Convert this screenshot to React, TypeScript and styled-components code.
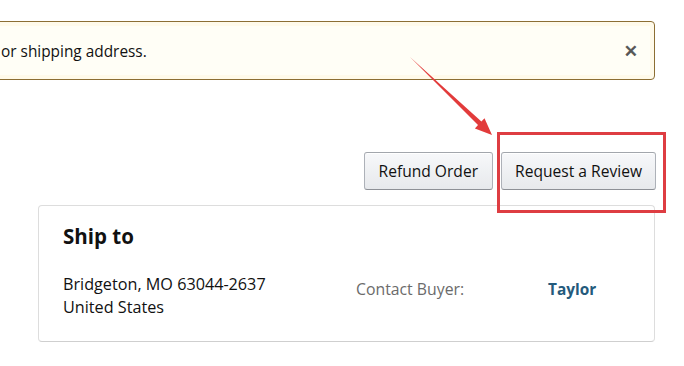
import React from "react";
import styled, { createGlobalStyle } from "styled-components";

const Global = createGlobalStyle`
  html, body { margin: 0; padding: 0; background: #fff; }
  body { font-family: "Open Sans", "Noto Sans", sans-serif; color: #111; overflow: hidden; }
`;

const Page = styled.div`
  position: relative;
  width: 684px;
  height: 366px;
  padding-top: 21px;
  box-sizing: border-box;
  overflow: hidden;
`;

const Alert = styled.div`
  box-sizing: border-box;
  margin-left: -20px;
  width: 675px;
  height: 59px;
  border: 1px solid #8c6e33;
  border-radius: 4px;
  background: #fffef6;
  box-shadow: inset 0 0 0 4px #fffaea;
  display: flex;
  align-items: center;
  justify-content: space-between;
  padding: 2px 16px 0 20px;
`;

const AlertText = styled.span`
  font-size: 15.4px;
  color: #111;
`;

const Close = styled.span`
  font-family: "DejaVu Sans", sans-serif;
  font-size: 17px;
  font-weight: bold;
  color: #555;
  line-height: 1;
  -webkit-text-stroke: 0.6px #555;
`;

const Actions = styled.div`
  margin-top: 72px;
  display: flex;
  justify-content: flex-end;
  gap: 8px;
  padding-right: 28px;
`;

const Button = styled.button<{ $pad: number }>`
  box-sizing: border-box;
  height: 38px;
  padding: 0 ${(p) => p.$pad}px;
  border: 1px solid #adb1b8;
  border-top-color: #a2a6ac;
  border-bottom-color: #8d9096;
  border-radius: 3px;
  background: linear-gradient(#f7f8fa, #e7e9ec);
  box-shadow: inset 0 1px 0 #fff;
  font-family: inherit;
  font-size: 15.6px;
  color: #111;
  cursor: pointer;
`;

const Card = styled.div`
  box-sizing: border-box;
  margin: 15px 29px 0 38px;
  height: 137px;
  border: 1px solid #ddd;
  border-bottom-color: #cfcfcf;
  border-radius: 4px;
  padding: 16px 24px 0;
`;

const Title = styled.h2`
  margin: 0;
  font-size: 20.5px;
  font-weight: 700;
  line-height: 29px;
  color: #111;
`;

const Details = styled.div`
  margin-top: 22px;
  display: grid;
  grid-template-columns: 293px 192px auto;
  align-items: start;
`;

const Address = styled.div`
  font-size: 16.2px;
  line-height: 23px;
  color: #111;
`;

const Label = styled.span`
  padding-top: 5px;
  font-size: 15.8px;
  line-height: 23px;
  color: #6b6b6b;
`;

const Buyer = styled.span`
  padding-top: 5px;
  font-size: 15.4px;
  line-height: 23px;
  font-weight: 700;
  color: #245a7c;
`;

const Overlay = styled.svg`
  position: absolute;
  left: 0;
  top: 0;
  width: 684px;
  height: 366px;
  pointer-events: none;
`;

export default function App() {
  return (
    <Page>
      <Global />
      <Alert>
        <AlertText>or shipping address.</AlertText>
        <Close>✕</Close>
      </Alert>
      <Actions>
        <Button $pad={14}>Refund Order</Button>
        <Button $pad={13}>Request a Review</Button>
      </Actions>
      <Card>
        <Title>Ship to</Title>
        <Details>
          <Address>
            Bridgeton, MO 63044-2637
            <br />
            United States
          </Address>
          <Label>Contact Buyer:</Label>
          <Buyer>Taylor</Buyer>
        </Details>
      </Card>
      <Overlay viewBox="0 0 684 366">
        <rect x="498.5" y="133.5" width="166" height="78" fill="none" stroke="#de3d42" strokeWidth="3" />
        <polygon
          points="410,57 481.4,121.5 484.5,118.2 492,135 474.9,128.4 478,125.1"
          fill="#e23b3b"
        />
      </Overlay>
    </Page>
  );
}
